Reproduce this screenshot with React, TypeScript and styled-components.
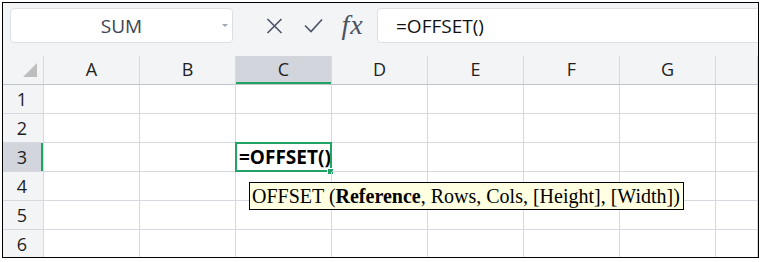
import { Fragment } from "react";
import styled, { createGlobalStyle } from "styled-components";

const GlobalStyle = createGlobalStyle`
  html, body {
    margin: 0;
    padding: 0;
    background: #ffffff;
  }
`;

const colors = {
  chrome: "#f3f4f6",
  grid: "#d6d9df",
  headerLine: "#bfc3cc",
  selectedHeader: "#d2d5db",
  green: "#21a366",
  icon: "#4b5262",
  text: "#1e1e1e",
};

const COLUMNS = ["A", "B", "C", "D", "E", "F", "G", ""];
const ROWS = [1, 2, 3, 4, 5, 6];
const ACTIVE_COL = "C";
const ACTIVE_ROW = 3;

const Frame = styled.div`
  position: relative;
  margin: 2px 0 0 2px;
  width: 757px;
  height: 256px;
  box-sizing: border-box;
  border: 1px solid #000;
  overflow: hidden;
  background: #fff;
  font-family: "Open Sans", "Noto Sans", "Liberation Sans", sans-serif;
`;

const Toolbar = styled.div`
  display: flex;
  align-items: center;
  height: 53px;
  box-sizing: border-box;
  padding: 5px 0 13px 7px;
  background: ${colors.chrome};
`;

const NameBox = styled.div`
  position: relative;
  display: flex;
  align-items: center;
  justify-content: center;
  width: 223px;
  height: 35px;
  box-sizing: border-box;
  border: 1px solid #dcdfe4;
  border-radius: 4px;
  background: #fff;
  color: #3c4354;
  font-size: 19px;
`;

const Caret = styled.span`
  position: absolute;
  right: 4px;
  top: 15px;
  width: 0;
  height: 0;
  border-left: 3px solid transparent;
  border-right: 3px solid transparent;
  border-top: 3px solid #a0a6ae;
`;

const IconRow = styled.div`
  display: flex;
  align-items: center;
  margin-left: 22px;
`;

const IconSlot = styled.div`
  display: flex;
  align-items: center;
  justify-content: center;
  width: 39px;
  height: 35px;
  color: ${colors.icon};
`;

const Fx = styled.span`
  font-family: "Liberation Serif", "DejaVu Serif", serif;
  font-style: italic;
  font-size: 28px;
  letter-spacing: 1px;
  line-height: 1;
  color: ${colors.icon};
  margin-top: -2px;
`;

const FormulaInput = styled.div`
  flex: 1;
  display: flex;
  align-items: center;
  height: 35px;
  margin: 0 -12px 0 5px;
  padding-left: 18px;
  box-sizing: border-box;
  border: 1px solid #dcdfe4;
  border-radius: 4px;
  background: #fff;
  color: #111;
  font-size: 19px;
`;

const Sheet = styled.div`
  display: grid;
  grid-template-columns: 41px repeat(7, 96px) 1fr;
  grid-auto-rows: 29px;
`;

const CornerCell = styled.div`
  display: flex;
  align-items: flex-end;
  justify-content: flex-end;
  padding: 0 6px 7px 0;
  box-sizing: border-box;
  background: ${colors.chrome};
  border-right: 1px solid ${colors.grid};
  border-bottom: 1px solid ${colors.headerLine};
`;

const ColumnHeader = styled.div<{ $selected?: boolean }>`
  display: flex;
  align-items: center;
  justify-content: center;
  box-sizing: border-box;
  background: ${({ $selected }) => ($selected ? colors.selectedHeader : colors.chrome)};
  border-right: 1px solid ${colors.grid};
  border-bottom: 1px solid ${colors.headerLine};
  box-shadow: ${({ $selected }) => ($selected ? `inset 0 -2px 0 ${colors.green}` : "none")};
  color: ${colors.text};
  font-size: 18px;
  padding-bottom: 2px;
`;

const RowHeader = styled.div<{ $selected?: boolean }>`
  display: flex;
  align-items: center;
  justify-content: center;
  box-sizing: border-box;
  padding-right: 2px;
  background: ${({ $selected }) => ($selected ? colors.selectedHeader : colors.chrome)};
  border-right: 1px solid ${colors.grid};
  border-bottom: 1px solid ${colors.grid};
  box-shadow: ${({ $selected }) => ($selected ? `inset -2px 0 0 ${colors.green}` : "none")};
  color: ${colors.text};
  font-size: 18px;
`;

const Cell = styled.div`
  position: relative;
  display: flex;
  align-items: center;
  box-sizing: border-box;
  padding-left: 3px;
  border-right: 1px solid ${colors.grid};
  border-bottom: 1px solid ${colors.grid};
  white-space: nowrap;
`;

const CellText = styled.span`
  font-weight: 700;
  font-size: 19px;
  color: #000;
`;

const Selection = styled.div`
  position: absolute;
  inset: -1px;
  border: 2px solid ${colors.green};
  pointer-events: none;
`;

const FillHandle = styled.div`
  position: absolute;
  right: -3px;
  bottom: -4px;
  width: 5px;
  height: 5px;
  background: ${colors.green};
  border: 1px solid #fff;
  border-right: none;
  border-bottom: none;
`;

const Tooltip = styled.div`
  position: absolute;
  left: 13px;
  top: 39px;
  z-index: 2;
  height: 28px;
  box-sizing: border-box;
  padding: 0 3px 0 2px;
  border: 1px solid #000;
  background: #ffffe1;
  color: #000;
  font-family: "Liberation Serif", "Times New Roman", serif;
  font-size: 20px;
  line-height: 26px;
  white-space: nowrap;
`;

const CloseIcon = () => (
  <svg width="17" height="16" viewBox="0 0 17 16">
    <path d="M1.5 1 L15.5 15 M15.5 1 L1.5 15" stroke="currentColor" strokeWidth="1.6" fill="none" />
  </svg>
);

const CheckIcon = () => (
  <svg width="19" height="15" viewBox="0 0 19 15">
    <path d="M1 7.5 L7 13.5 L18 1.5" stroke="currentColor" strokeWidth="1.6" fill="none" />
  </svg>
);

const CornerTriangle = () => (
  <svg width="14" height="14" viewBox="0 0 14 14">
    <polygon points="14,0 14,14 0,14" fill="#bdbdbd" />
  </svg>
);

export default function App() {
  return (
    <>
      <GlobalStyle />
      <Frame>
        <Toolbar>
          <NameBox>
            SUM
            <Caret />
          </NameBox>
          <IconRow>
            <IconSlot>
              <CloseIcon />
            </IconSlot>
            <IconSlot>
              <CheckIcon />
            </IconSlot>
            <IconSlot>
              <Fx>fx</Fx>
            </IconSlot>
          </IconRow>
          <FormulaInput>=OFFSET()</FormulaInput>
        </Toolbar>

        <Sheet>
          <CornerCell>
            <CornerTriangle />
          </CornerCell>
          {COLUMNS.map((col, i) => (
            <ColumnHeader key={`h${i}`} $selected={col === ACTIVE_COL}>
              {col}
            </ColumnHeader>
          ))}

          {ROWS.map((row) => (
            <Fragment key={`r${row}`}>
              <RowHeader $selected={row === ACTIVE_ROW}>{row}</RowHeader>
              {COLUMNS.map((col, i) => {
                const active = row === ACTIVE_ROW && col === ACTIVE_COL;
                return (
                  <Cell key={`c${row}-${i}`}>
                    {active && (
                      <>
                        <CellText>=OFFSET()</CellText>
                        <Selection>
                          <FillHandle />
                        </Selection>
                        <Tooltip>
                          OFFSET (<b>Reference</b>, Rows, Cols, [Height], [Width])
                        </Tooltip>
                      </>
                    )}
                  </Cell>
                );
              })}
            </Fragment>
          ))}
        </Sheet>
      </Frame>
    </>
  );
}
